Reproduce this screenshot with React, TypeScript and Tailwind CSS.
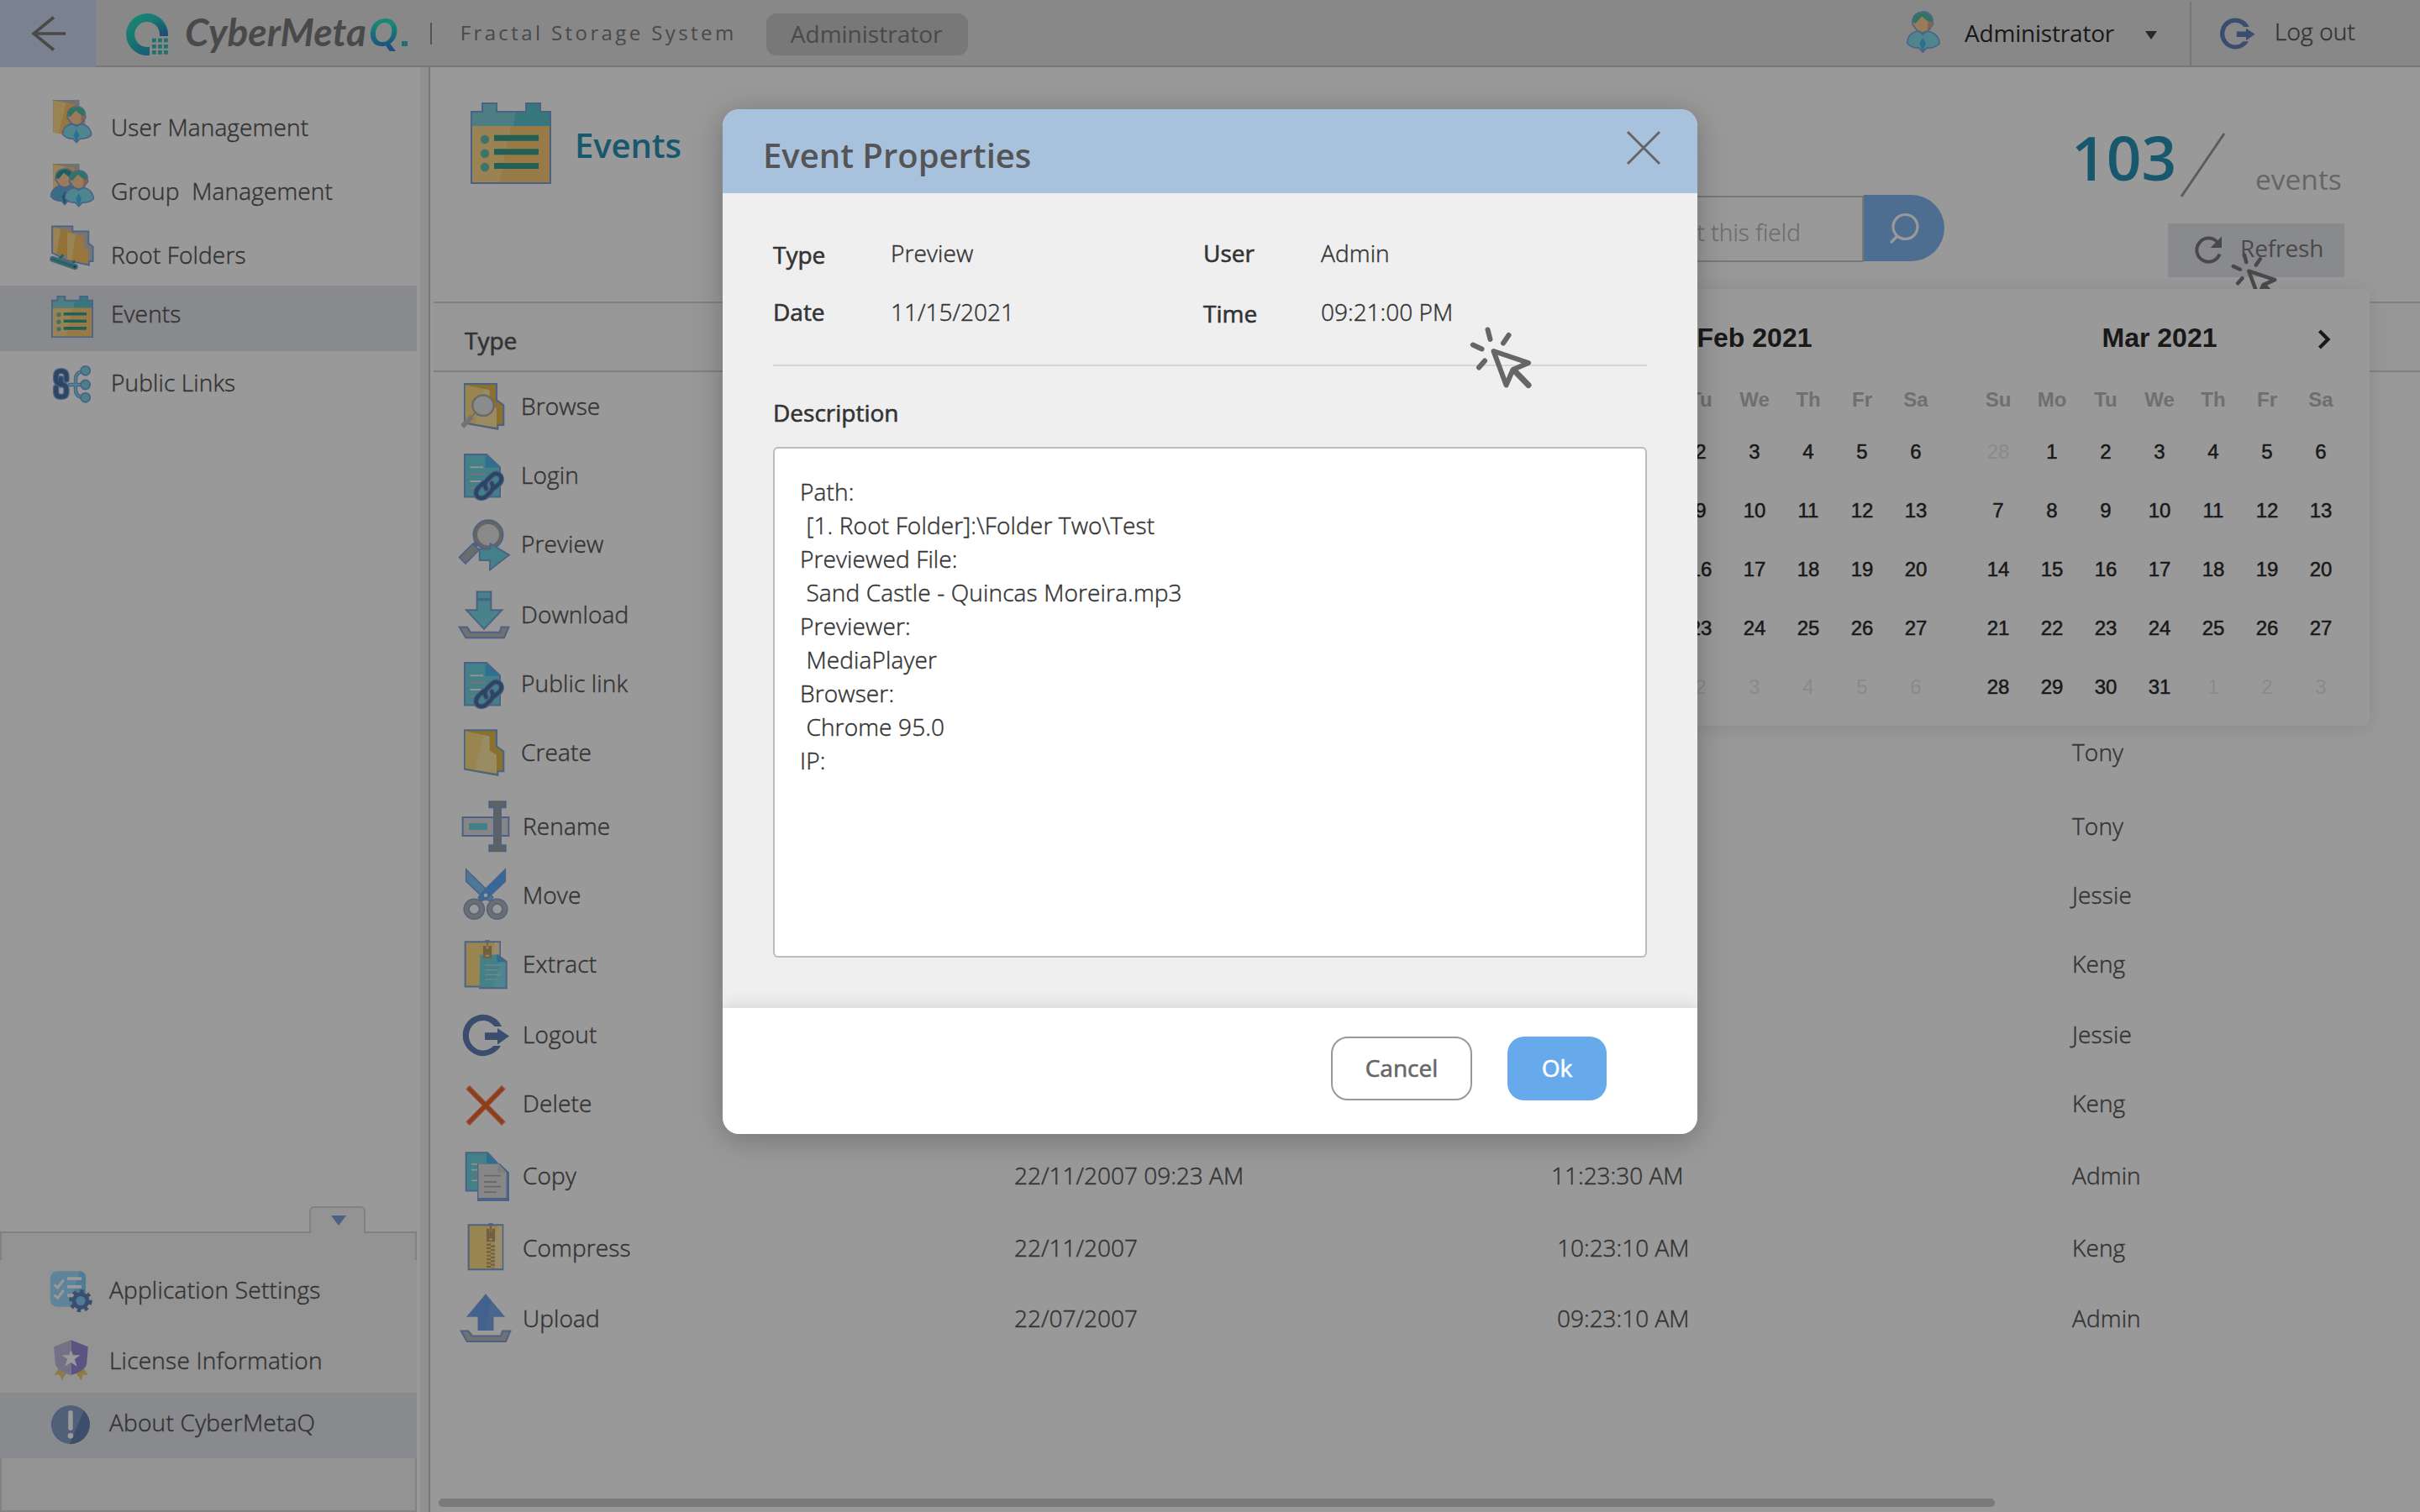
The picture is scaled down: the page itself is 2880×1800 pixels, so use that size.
import type { ReactNode } from "react";

const LINE = "#7fa3dc";
const PX = "[&_*]:[vector-effect:non-scaling-stroke]";

/* Text weights that sit between the installed cuts of Open Sans */
const BOOK = "font-light tracking-[0.14px] [-webkit-text-stroke:0.45px_currentColor]";
const DEMI = "font-medium tracking-normal [-webkit-text-stroke:0.6px_currentColor]";

/* ---------- shared drawings ---------- */

function Person({ hair = "#4fc0a8", body = "#84deed", tie = "#4bbaf0" }: { hair?: string; body?: string; tie?: string }) {
  return (
    <g stroke={LINE} strokeWidth="1.6" strokeLinejoin="round">
      <path d="M104 180C104 156 122 143 140 142L153 152L167 142C190 145 205 160 206 182C195 194 176 197 166 195L153 209L141 195C124 197 112 190 104 180Z" fill={body} />
      <path d="M153 162L163 182L153 208L143 182Z" fill={tie} stroke="none" />
      <path d="M121 112C120 92 136 81 154 81C172 81 186 93 184 112C187 118 184 124 180 127C175 138 164 146 153 147C142 146 131 138 126 127C121 124 119 118 121 112Z" fill="#ffcb98" />
      <path d="M123 114C121 94 137 83 154 83C171 83 184 95 182 112L178 118L150 95L130 118Z" fill={hair} stroke="none" />
      <path d="M170 110L182 116L178 128L168 140Z" fill="#f0a080" stroke="none" />
    </g>
  );
}

function EventsGlyph({ className }: { className: string }) {
  return (
    <svg viewBox="0 0 96 97" className={`${className} ${PX}`}>
      <path d="M1 11H14V1H31V11H66V1H83V11H95V96H1Z" fill="#fdcb76" />
      <path d="M1 28H48L34 96H1Z" fill="#ffdb8e" />
      <path d="M1 11H14V1H31V11H66V1H83V11H95V28H1Z" fill="#5cc9d4" />
      <path d="M1 11H14V1H31V11H54L51 28H1Z" fill="#7fd3da" />
      <path d="M1 11H14V1H31V11H66V1H83V11H95V96H1Z" fill="none" stroke={LINE} strokeWidth="2" />
      {[44, 60.7, 77].map((y) => (
        <circle key={y} cx="17" cy={y} r="5.2" fill="#6cc0ac" />
      ))}
      <path d="M28 38.7H81V45.7H28ZM28 55.3H81V62.2H28ZM28 72H81V79H28Z" fill="#39a08e" />
    </svg>
  );
}

function ClickCursor({ className }: { className: string }) {
  return (
    <svg viewBox="0 0 75 75" className={className} fill="none" stroke="currentColor" strokeWidth="6" strokeLinecap="round" strokeLinejoin="round">
      <path d="M21.5 3.5L24.5 15M46.5 10L40 19.5M3.8 21.5L14.5 26.5M18 40.5L11 48.5" />
      <path d="M28.5 29L70 43L51.5 51L43.5 69.5Z" />
      <path d="M54 53L70 69.5" strokeWidth="7" />
    </svg>
  );
}

function LogoutShape() {
  return (
    <g fill="#6280b7">
      <path d="M261 650A73 57 0 1 0 258 703L232 703A51 41 0 1 1 235 650Z" />
      <path d="M201 667H246V655L288 677L246 700V687H201Z" />
    </g>
  );
}

/* ---------- sidebar drawings ---------- */

const UserArt = (
  <>
    <path d="M69 57H164V92L184 120V150H145L69 172Z" fill="#bdbdbd" />
    <path d="M70 59L146 72V186L70 173Z" fill="#fdc566" />
    <path d="M70 59L115 67L90 177L70 173Z" fill="#ffdc8a" />
    <Person />
  </>
);

const GroupArt = (
  <>
    <path d="M69 285H164V330H69Z" fill="#bdbdbd" />
    <path d="M70 287L146 300V400L70 372Z" fill="#fdc566" />
    <path d="M70 287L112 294L92 372H70Z" fill="#ffdc8a" />
    <g transform="translate(-42 222)">
      <Person hair="#2e9fa0" body="#5fb4e2" tie="#2e8fa0" />
    </g>
    <g transform="translate(8 228)">
      <Person />
    </g>
  </>
);

const RootArt = (
  <>
    <path d="M66 508H139V526H196V569L212 581V633H198V647L118 630L66 603Z" fill="#c4c4c4" stroke={LINE} strokeWidth="1.8" />
    <path d="M70 512L137 526V618L70 603Z" fill="#f5bc5c" />
    <path d="M70 512L97 518L82 606L70 603Z" fill="#ffd98a" />
    <path d="M120 530L179 544V580L194 590V642L120 626Z" fill="#fdc566" />
    <path d="M120 530L150 537L136 629L120 626Z" fill="#ffdc8a" />
    <path d="M88 628L106 610M134 645L148 632" stroke="#3aa68d" strokeWidth="3" />
    <path d="M68 625L148 653" stroke={LINE} strokeWidth="7" strokeLinecap="round" />
    <path d="M68 625L148 653" stroke="#3fae94" strokeWidth="3.6" strokeLinecap="round" />
    <circle cx="147" cy="653" r="5" fill="#1d7a5c" />
  </>
);

const LinksArt = (
  <>
    <g fill="none" strokeLinecap="round">
      <path d="M128 1074H185M185 1024C160 1026 150 1036 150 1054V1092C150 1110 162 1120 185 1120" stroke={LINE} strokeWidth="4.4" />
      <path d="M128 1074H185M185 1024C160 1026 150 1036 150 1054V1092C150 1110 162 1120 185 1120" stroke="#84deed" strokeWidth="1.8" />
      {[
        [LINE, "7.4"],
        ["#4873a3", "4.8"],
      ].map(([c, w]) => (
        <path key={c} d="M97 1074C83 1070 80 1064 80 1054V1044C80 1030 86 1025 98 1025S117 1030 117 1044V1056M97 1052V1062C97 1068 101 1073 108 1075C116 1079 117 1084 117 1092V1100C117 1112 110 1117 98 1117S80 1112 80 1100V1084" stroke={c} strokeWidth={w} />
      ))}
    </g>
    {[1024, 1074, 1120].map((y) => (
      <circle key={y} cx="185" cy={y} r="16.5" fill="#7cd6e4" stroke={LINE} strokeWidth="1.8" />
    ))}
  </>
);

const SettingsArt = (
  <>
    <rect x="109" y="340" width="77" height="127" rx="15" ry="25" fill="#9fdcff" />
    <path d="M172 340C182 341 186 350 186 362V440C186 456 182 466 171 467H152Z" fill="#84cdfa" />
    <path d="M146 361H177V372H146ZM146 390H177V401H146ZM146 421H164V431H146Z" fill="#fff" />
    <path d="M118 388L125 399L138 371M118 425L125 436L138 408" fill="none" stroke="#fff" strokeWidth="3" />
    <ellipse cx="175" cy="446" rx="21" ry="34" fill="none" stroke="#6283ba" strokeWidth="4.4" strokeDasharray="4.4 4.4" />
    <ellipse cx="175" cy="446" rx="19" ry="31" fill="#6283ba" />
    <ellipse cx="175" cy="446" rx="10" ry="17" fill="#84cdfa" />
  </>
);

const LicenseArt = (
  <>
    <path d="M127 688L118 711L129 709L134 730L146 700ZM181 688L191 711L180 709L176 730L163 700Z" fill="#eecb73" />
    <path d="M154 586L191 610L188 672C184 692 170 704 154 711Z" fill="#968cd9" />
    <path d="M154 586L117 610L120 672C124 692 138 704 154 711Z" fill="#c0bce0" />
    <path d="M154 620L158.500 640L174 640L162 654L167 680L154 666L141 680L146 654L134 640L149.500 640Z" fill="#fff" />
  </>
);

const AboutArt = (
  <>
    <ellipse cx="153" cy="888" rx="42" ry="69" fill="#84a0c8" />
    <path d="M182 838C200 870 198 905 183 933C175 950 164 957 151 957Z" fill="#6482b4" />
    <rect x="148" y="837" width="10" height="72" rx="5" ry="8" fill="#fff" />
    <ellipse cx="153" cy="928" rx="6" ry="10" fill="#fff" />
  </>
);

/* ---------- event type drawings ---------- */

const tray = (d: string) => <path d={d} fill="#bcbcbc" stroke={LINE} strokeWidth="2" />;

const FolderArt = (
  <>
    <path d="M129 1338H243V1387L268 1402V1462H247V1474L129 1456Z" fill="#e6bb50" stroke={LINE} strokeWidth="2" />
    <path d="M131 1341L218 1357V1400L243 1412V1468L131 1453Z" fill="#ffde85" />
    <path d="M197 1353L218 1357V1400L243 1412V1468L166 1458Z" fill="#ffe8a4" />
  </>
);

const DocLinkArt = (
  <>
    <path d="M129 508H207L255 547V636H129Z" fill="#70d5e2" stroke={LINE} strokeWidth="2" />
    <path d="M203 510L254 548H203Z" fill="#4bbaf0" />
    <path d="M148 547H195M148 589H195" stroke="#f2f2f2" strokeWidth="2" />
    <path d="M148 568H203M148 609H180" stroke="#c4c4c4" strokeWidth="2" />
    <g fill="none" strokeLinecap="round">
      {[
        [LINE, "6.8"],
        ["#4873a3", "4.4"],
      ].map(([c, w]) => (
        <g key={c} stroke={c} strokeWidth={w}>
          <path d="M228 610C236 610 240 606 246 601L254 595C264 585 260 574 252 569C244 564 234 566 226 572L210 585C200 594 198 602 206 612" />
          <path d="M202 592C194 594 188 600 182 605C166 617 168 630 176 636C186 642 198 640 206 634L222 621C232 612 232 604 226 595" />
        </g>
      ))}
    </g>
  </>
);

type Art = { box: string; art: ReactNode };

const ART: Record<string, Art> = {
  Browse: {
    box: "102 283.3 204 161.9",
    art: (
      <>
        <g transform="translate(0 -1042)">{FolderArt}</g>
        <path d="M155 394L170 380" stroke="#b4b4b4" strokeWidth="1.6" />
        <path d="M115 418L150 389L161 400L126 430Z" fill="#c0c0c0" />
        <ellipse cx="195" cy="361" rx="38" ry="31" fill="#e8e8e8" stroke="#b0b0b0" strokeWidth="2.4" />
      </>
    ),
  },
  Login: { box: "102 490.6 204 161.9", art: DocLinkArt },
  "Public link": { box: "102 490.6 204 161.9", art: DocLinkArt },
  Preview: {
    box: "102 698 204 161.9",
    art: (
      <>
        <path d="M160 784L182 770" stroke={LINE} strokeWidth="6" />
        <path d="M110 818L157 778L181 795L132 837Z" fill="#b4b4b4" stroke={LINE} strokeWidth="1.8" />
        <ellipse cx="213" cy="750" rx="46" ry="38" fill="#e4e4e4" stroke={LINE} strokeWidth="6.4" />
        <ellipse cx="213" cy="750" rx="45" ry="37" fill="#e4e4e4" stroke="#a8a8a8" strokeWidth="4" />
        <path d="M182 793H221V777L288 811L219 856V827H182Z" fill="#70d5e2" stroke={LINE} strokeWidth="1.8" />
      </>
    ),
  },
  Download: {
    box: "102 910.4 204 161.9",
    art: (
      <>
        <path d="M173 922H223V977H262L198 1034L135 977H173Z" fill="#78d9e6" stroke={LINE} strokeWidth="2" />
        <path d="M173 945H223" stroke={LINE} strokeWidth="3" />
        {tray("M110 1028H138L150 1044H254L260 1028H286L270 1060H133Z")}
      </>
    ),
  },
  Create: { box: "102 1325 204 161.9", art: FolderArt },
  Rename: {
    box: "102 27.700 204 147.600",
    art: (
      <>
        <path d="M122 76H286V127H122Z" fill="#e0e0e0" stroke={LINE} strokeWidth="2" />
        <path d="M144 92H210V111H144Z" fill="#70d5e2" />
        <path d="M217 33H275V49H258V153H275V169H217V153H234V49H217Z" fill="#a0a0a0" stroke={LINE} strokeWidth="2" />
      </>
    ),
  },
  Move: {
    box: "102 216.800 204 147.600",
    art: (
      <>
        <path d="M134 219L204 272L230 296L222 306L200 300L134 252Z" fill="#84c8fd" stroke={LINE} strokeWidth="1.6" />
        <path d="M274 219L204 272L178 296L186 306L208 300L274 252Z" fill="#5aafff" stroke={LINE} strokeWidth="1.6" />
        {[163, 245].map((x) => (
          <g key={x} fill="none">
            <ellipse cx={x} cy="328" rx="27.500" ry="21" stroke={LINE} strokeWidth="7.4" />
            <ellipse cx={x} cy="328" rx="27.500" ry="21" stroke="#b8b8b8" strokeWidth="4.4" />
          </g>
        ))}
        <ellipse cx="204" cy="290" rx="7" ry="5" fill="#fff" />
      </>
    ),
  },
  Extract: {
    box: "102 405.800 204 147.600",
    art: (
      <>
        <path d="M131 418H255V541H131Z" fill="#ffde85" stroke={LINE} strokeWidth="2" />
        <path d="M236 420H253V460H226Z" fill="#ffe8b4" />
        <path d="M202 413H218V420H202Z" fill={LINE} />
        <path d="M210 418V430" stroke="#bf9f70" strokeWidth="1.5" />
        <path d="M184 453H245L278 472V544H182" fill="#70d5e2" />
        <path d="M258 470H277V544H230Z" fill="#84deed" />
        <path d="M244 453L277 473H244Z" fill="#4bbaf0" />
        <path d="M195 429H206V437H214V429H225V463H195Z" fill="#bf9f70" />
        <path d="M203 456H217" stroke="#ffde85" strokeWidth="2" />
        <path d="M245 453L278 472V545H180" fill="none" stroke={LINE} strokeWidth="2" />
        <path d="M201 482H258M201 495H243M201 508H258M201 521H243" stroke="#b8e4e6" strokeWidth="1.600" />
      </>
    ),
  },
  Logout: { box: "102 599.500 204 147.600", art: <LogoutShape /> },
  Delete: {
    box: "102 788.600 204 147.600",
    art: (
      <>
        <path d="M140 817L268 917M268 817L140 917" stroke="#ff7b64" strokeWidth="6.4" />
        <path d="M143 820L265 914M265 820L143 914" stroke="#e66923" strokeWidth="3.6" />
      </>
    ),
  },
  Copy: {
    box: "102 987 204 147.600",
    art: (
      <>
        <path d="M134 997H211L246 1026V1101H134Z" fill="#70d5e2" stroke={LINE} strokeWidth="2" />
        <path d="M207 998L244 1027H207Z" fill="#4bbaf0" />
        <path d="M153 1028H190M153 1044H178M153 1073H178" stroke="#e6f6f6" strokeWidth="1.800" />
        <path d="M153 1058H178" stroke="#b8b8b8" strokeWidth="1.800" />
        <path d="M174 1027H255L288 1051V1130H174Z" fill={LINE} />
        <path d="M178 1028H250L278 1051V1121H178Z" fill="#e2e2e2" />
        <path d="M247 1030L277 1051H247Z" fill="#d0d0d0" />
        <path d="M198 1060H258M198 1077H243M198 1090H258M198 1105H243" stroke="#b0b0b0" strokeWidth="1.800" />
      </>
    ),
  },
  Compress: {
    box: "102 1185 204 147.600",
    art: (
      <>
        <path d="M143 1195H265V1317H143Z" fill="#ffde85" stroke={LINE} strokeWidth="2" />
        <path d="M246 1197H263V1314H237V1240Z" fill="#ffe8b4" />
        <path d="M214 1190H230V1197H214Z" fill={LINE} />
        <path d="M222 1196V1212" stroke="#bf9f70" strokeWidth="2" />
        <path d="M207 1205H217V1213H227V1205H237V1241H207Z" fill="#bf9f70" />
        <path d="M216 1234H228" stroke="#ffde85" strokeWidth="2" />
        <path d="M214.500 1246V1313" stroke="#bf9f70" strokeWidth="5" strokeDasharray="2.200 2.200" />
        <path d="M229.500 1251V1313" stroke="#bf9f70" strokeWidth="5" strokeDasharray="2.200 2.200" />
      </>
    ),
  },
  Upload: {
    box: "102 1379 204 147.600",
    art: (
      <>
        <path d="M204 1387L268 1446H230V1483H178V1446H140Z" fill="#6ea2ee" stroke={LINE} strokeWidth="1.600" />
        <path d="M222 1405L266 1445H229V1482H204Z" fill="#7aaaf0" />
        <path d="M178 1461H230" stroke={LINE} strokeWidth="2" />
        {tray("M116 1486H142L156 1500H258L264 1486H292L276 1515H137Z")}
      </>
    ),
  },
};

/* ---------- page data ---------- */

const ROWS = [
  { type: "Browse", h: "h-[82px]", pad: "pl-2" },
  { type: "Login", h: "h-[82px]", pad: "pl-2" },
  { type: "Preview", h: "h-[82px]", pad: "pl-2" },
  { type: "Download", h: "h-[86px]", pad: "pl-2" },
  { type: "Public link", h: "h-[78px]", pad: "pl-2" },
  { type: "Create", h: "h-[86px]", pad: "pl-2", user: "Tony" },
  { type: "Rename", h: "h-[90px]", pad: "pl-2.5", user: "Tony" },
  { type: "Move", h: "h-[74px]", pad: "pl-2.5", user: "Jessie" },
  { type: "Extract", h: "h-[90px]", pad: "pl-2.5", user: "Keng" },
  { type: "Logout", h: "h-[78px]", pad: "pl-2.5", user: "Jessie" },
  { type: "Delete", h: "h-[86px]", pad: "pl-2.5", user: "Keng" },
  { type: "Copy", h: "h-[86px]", pad: "pl-2.5", date: "22/11/2007 09:23 AM", time: "11:23:30 AM", timePad: "", user: "Admin" },
  { type: "Compress", h: "h-[86px]", pad: "pl-2.5", date: "22/11/2007", time: "10:23:10 AM", timePad: "pl-[7px]", user: "Keng" },
  { type: "Upload", h: "h-[82px]", pad: "pl-2.5", date: "22/07/2007", time: "09:23:10 AM", timePad: "pl-[7px]", user: "Admin" },
];

const DAYS = ["Su", "Mo", "Tu", "We", "Th", "Fr", "Sa"];

const FEB = [31, ...Array.from({ length: 28 }, (_, i) => i + 1), 1, 2, 3, 4, 5, 6];
const MAR = [28, ...Array.from({ length: 31 }, (_, i) => i + 1), 1, 2, 3];

/* ---------- pieces ---------- */

function NavRow({ label, box, height, text = "", active, art }: { label: string; box: string; height: string; text?: string; active?: boolean; art: ReactNode }) {
  return (
    <div className={`flex items-center ${height} ${active ? "bg-[#e4e6ec]" : ""}`}>
      <svg viewBox={box} preserveAspectRatio="none" className={`ml-10 h-full w-[90px] shrink-0 ${PX}`}>
        {art}
      </svg>
      <span className={`whitespace-pre ${text}`}>{label}</span>
    </div>
  );
}

function Header() {
  return (
    <header className="flex h-20 items-start">
      <button className="h-20 w-[114px] bg-[#cbd9f0]">
        <svg viewBox="0 0 114 80" className="h-20 w-[114px]" fill="none" stroke="#7b7b7b" strokeWidth="3.6">
          <path d="M78 40H40M64 20.500L40 40L64 59.500" />
        </svg>
      </button>
      <div className="flex h-20 grow items-start border-b-2 border-[#c6c6c6] bg-[#e3e3e3]">
        <svg viewBox="60 48 150 150" className="mt-4 ml-9 size-[50px]">
          <defs>
            <linearGradient id="ring" x1="0.2" y1="0" x2="0.8" y2="1">
              <stop offset="0" stopColor="#2ae2c4" />
              <stop offset="0.550" stopColor="#2ab8bc" />
              <stop offset="1" stopColor="#2f8ad0" />
            </linearGradient>
            <linearGradient id="tail" x1="0" y1="0" x2="0.6" y2="1">
              <stop offset="0" stopColor="#2aa8b0" stopOpacity="0" />
              <stop offset="1" stopColor="#2f80c8" />
            </linearGradient>
          </defs>
          <path d="M210 129A75 75 0 1 0 144 197.500V167A45 45 0 1 1 180 129Z" fill="url(#ring)" />
          <path d="M168 65A75 75 0 0 1 210 129H180A45 45 0 0 0 152 81Z" fill="url(#tail)" />
          <g fill="#35bcb8">
            {[137, 159, 180].map((y) => [153, 174, 195].map((x) => <rect key={`${x}-${y}`} x={x} y={y} width="14.500" height="14" />))}
          </g>
        </svg>
        <div className="mt-[13px] ml-5 flex h-[50px] items-center font-[Lato] text-[46px] leading-none font-bold text-[#7b7b7b] italic">
          <span className="w-[219px]">CyberMeta</span>
          <span className="bg-linear-to-b from-[#2ae2c4] from-25% to-[#2f86d4] to-90% bg-clip-text pr-1 text-transparent">Q</span>
        </div>
        <span className="mt-[49px] h-1.5 w-[7px] bg-[#35b8bc]" />
        <span className="mt-[27px] ml-[27px] h-[26px] w-0.5 bg-[#8c8c8c]" />
        <span className="mt-[27px] ml-[34px] w-[364px] text-2xl leading-none tracking-[3.4px] text-[#7b7b7b]">Fractal Storage System</span>
        <span className="mt-4 flex h-[50px] w-[240px] items-center justify-center rounded-xl bg-[#c8c8c8] pr-px pb-0.5 leading-none font-medium text-[#7b7b7b]">Administrator</span>
        <svg viewBox="99 78 112 136" className={`mt-[13px] ml-auto h-[51px] w-[42px] ${PX}`}>
          <Person />
        </svg>
        <span className="mt-[25px] ml-7 w-[179px] leading-none tracking-[-0.2px] whitespace-nowrap text-[#2b2b2b]">Administrator</span>
        <svg viewBox="0 0 14 10" className="mt-[37px] ml-[36px] h-[10px] w-[14px]">
          <path d="M0 0H14L7 10Z" fill="#444" />
        </svg>
        <span className="mt-0.5 ml-[39px] h-[76px] w-0.5 bg-[#c6c6c6]" />
        <svg viewBox="118 616 172 117" preserveAspectRatio="none" className="mt-[21px] ml-[33px] h-[38px] w-[43px]">
          <LogoutShape />
        </svg>
        <span className={`mt-[23px] mr-[76px] ml-[23px] w-[97px] leading-none whitespace-nowrap ${BOOK}`}>Log out</span>
      </div>
    </header>
  );
}

function Sidebar() {
  return (
    <aside className={`flex w-[512px] border-r-2 border-[#c6c6c6] ${BOOK}`}>
      <div className="flex w-[500px] flex-col">
        <nav className="mt-[34px] w-[496px]">
          <NavRow label="User Management" box="0 42 270 228" height="h-[76px]" text="pl-0.5 pb-0.5" art={UserArt} />
          <NavRow label="Group  Management" box="0 270 270 228" height="h-[76px]" text="pl-0.5 pb-0.5" art={GroupArt} />
          <NavRow label="Root Folders" box="0 498 270 222" height="h-[74px]" text="pl-0.5" art={RootArt} />
          <div className="flex h-[78px] items-center bg-[#e4e6ec]">
            <EventsGlyph className="mr-[21px] mb-[5px] ml-[61px] size-[50px]" />
            <span className="pb-3">Events</span>
          </div>
          <NavRow label="Public Links" box="0 954 270 228" height="h-[76px]" text="pl-0.5 pb-0.5" art={LinksArt} />
        </nav>
        <div className="mt-auto w-[496px]">
          <div className="relative -mb-0.5 ml-[368px] flex h-8 w-[67px] items-center justify-center rounded-t-md border-2 border-b-0 border-[#d8d8d8] bg-[#f5f5f5]">
            <svg viewBox="0 0 18 12" className="ml-0.5 h-3 w-[18px]">
              <path d="M0 0H18L9 12Z" fill="#7fa3dc" />
            </svg>
          </div>
          <div className="h-[334px] border-2 border-[#d8d8d8] bg-[#f5f5f5] pt-8">
            <div className="-mx-0.5 bg-[#f5f5f5] tracking-[0.24px]">
              <NavRow label="Application Settings" box="72.900 300 164.100 240" height="h-20" text="pb-2.5" art={SettingsArt} />
              <NavRow label="License Information" box="72.900 540 164.100 234" height="h-[78px]" art={LicenseArt} />
              <NavRow label="About CyberMetaQ" box="72.900 774 164.100 234" height="h-[78px]" text="pb-2" active art={AboutArt} />
            </div>
          </div>
        </div>
      </div>
      <div className="grow bg-[#f2f2f2]" />
    </aside>
  );
}

function Toolbar() {
  return (
    <div className="flex h-[279px] items-start">
      <EventsGlyph className="mt-[42px] ml-12 h-[97px] w-24" />
      <h1 className="mt-[73px] ml-7 text-[40px] leading-none font-semibold tracking-[-0.1px] text-[#2893b4]">Events</h1>
      <div className="mt-[152px] ml-auto flex h-20 w-[614px] items-start">
        <div className="mt-px flex h-[79px] grow items-center justify-end border-2 border-[#c8c8c8] bg-white pt-1.5 pr-[73px] leading-none font-light tracking-[0.1px] text-[#b4b4b4] [-webkit-text-stroke:0.3px_currentColor]">Input this field</div>
        <button className="h-[79px] w-24 rounded-r-full bg-[#80b8f2]">
          <svg viewBox="0 0 96 79" className="h-[79px] w-24" fill="none" stroke="#fff" strokeWidth="3.200" strokeLinecap="round">
            <circle cx="49.500" cy="38" r="14.500" />
            <path d="M40 49L33 56" />
          </svg>
        </button>
      </div>
      <div className="mt-[70px] mr-[90px] ml-[154px] flex w-[322px] flex-col items-end">
        <div className="flex h-[116px] w-full items-start">
          <span className="-ml-[3px] w-[127px] text-[73px] leading-none font-semibold text-[#2893b4]">103</span>
          <svg viewBox="0 0 60 80" className="mt-[7px] ml-0.5 h-20 w-[60px] shrink-0">
            <path d="M2 77L53 2" stroke="#9a9a9a" strokeWidth="3" />
          </svg>
          <span className="mt-[47px] ml-[30px] text-[33.500px] leading-none font-medium text-[#aaa]">events</span>
        </div>
        <button className="relative flex h-16 w-[210px] items-center bg-[#e4e6ec] text-[#7b7b7b]">
          <svg viewBox="0 0 34 34" className="ml-8 size-[34px]" fill="none" stroke="#7b7b7b" strokeWidth="4">
            <path d="M29.500 21.500A14 14 0 1 1 27 7.500" />
            <path d="M32 0.500V14H18.500Z" fill="#7b7b7b" stroke="none" />
          </svg>
          <span className="ml-5 pb-1.5 leading-none tracking-[-0.1px]">Refresh</span>
          <ClickCursor className="absolute top-[35px] left-[75px] size-[56px]" />
        </button>
      </div>
    </div>
  );
}

function Month({ name, days, from, count }: { name: string; days: number[]; from: number; count: number }) {
  return (
    <div className="w-[448px] text-center">
      <div className="h-[76px] text-[32px] leading-[32px] font-bold">{name}</div>
      <div className="grid grid-cols-7 text-2xl">
        {DAYS.map((d) => (
          <span key={d} className="h-[41px] leading-[28px] font-bold text-[#b9b9b9]">{d}</span>
        ))}
        {days.map((n, i) => (
          <span key={i} className={i < from || i >= from + count ? "h-[70px] leading-[70px] text-[#e6e6e6]" : "h-[70px] leading-[70px] [-webkit-text-stroke:0.5px_#2b2b2b]"}>{n}</span>
        ))}
      </div>
    </div>
  );
}

function Calendar() {
  return (
    <div className="absolute top-[344px] right-[60px] flex h-[520px] w-[982px] justify-between rounded-lg bg-white px-[26px] pt-[42px] font-['Liberation_Sans'] text-[#2b2b2b] shadow-[0_2px_24px_rgba(0,0,0,0.1)]">
      <Month name="Feb 2021" days={FEB} from={1} count={28} />
      <Month name="Mar 2021" days={MAR} from={1} count={31} />
      <svg viewBox="0 0 16 24" className="absolute top-[48px] right-[46px] h-6 w-4" fill="none" stroke="#2b2b2b" strokeWidth="4.200">
        <path d="M2.500 2L12.500 12L2.500 22" />
      </svg>
    </div>
  );
}

function EventTable() {
  return (
    <>
      <div className={`ml-1 flex h-[84px] items-center border-y-2 border-[#d6d6d6] bg-[#fcfcfc] pt-2 pl-[37px] ${DEMI}`}>Type</div>
      {ROWS.map((row) => (
        <div key={row.type} className={`grid grid-cols-[695px_639px_620px_1fr] items-center leading-none ${BOOK} ${row.h}`}>
          <div className="flex items-center pl-8">
            <svg viewBox={ART[row.type].box} preserveAspectRatio="none" className={`h-16 w-[68px] overflow-visible ${PX}`}>
              {ART[row.type].art}
            </svg>
            <span className={`pb-0.5 ${row.pad}`}>{row.type}</span>
          </div>
          <span className="pb-0.5 tracking-normal">{row.date}</span>
          <span className={`pb-0.5 tracking-normal ${row.timePad ?? ""}`}>{row.time}</span>
          <span className="pb-0.5">{row.user}</span>
        </div>
      ))}
    </>
  );
}

function EventDialog() {
  return (
    <div className={`absolute inset-0 flex items-start justify-center bg-black/40 pt-[130px] leading-none text-[#333] ${BOOK}`}>
      <div className="relative flex h-[1220px] w-[1160px] flex-col overflow-hidden rounded-[20px] bg-[#efefef] shadow-[0_6px_36px_rgba(0,0,0,0.25)]">
        <div className="flex h-[100px] shrink-0 items-center justify-between bg-[#a8c2de] pt-1.5 pr-[43px] pl-12">
          <h2 className="pt-1 text-[40px] leading-none font-semibold tracking-normal text-[#555] [-webkit-text-stroke:0px]">Event Properties</h2>
          <svg viewBox="0 0 42 42" className="mb-3.5 size-[42px]" stroke="#666" strokeWidth="3">
            <path d="M2 2L40 40M40 2L2 40" />
          </svg>
        </div>
        <div className="flex grow flex-col px-[60px]">
          <div className="mt-[57px] grid grid-cols-[140px_372px_140px_1fr] gap-y-[42px]">
            <span className={`pt-0.5 ${DEMI}`}>Type</span>
            <span>Preview</span>
            <span className={DEMI}>User</span>
            <span>Admin</span>
            <span className={`-mt-0.5 ${DEMI}`}>Date</span>
            <span className="-mt-0.5 tracking-normal">11/15/2021</span>
            <span className={DEMI}>Time</span>
            <span className="-mt-0.5 tracking-normal">09:21:00 PM</span>
          </div>
          <div className="mt-[47px] h-0.5 bg-[#d6d6d6]" />
          <div className={`mt-[41px] ${DEMI}`}>Description</div>
          <div className="mt-[27px] h-[608px] rounded-md border-2 border-[#bbb] bg-white pt-[31px] pl-[30px] leading-10 whitespace-pre">
            {"Path:\n [1. Root Folder]:\\Folder Two\\Test\nPreviewed File:\n Sand Castle - Quincas Moreira.mp3\nPreviewer:\n MediaPlayer\nBrowser:\n Chrome 95.0\nIP:"}
          </div>
        </div>
        <div className="flex h-[150px] shrink-0 items-start justify-end bg-white pt-[34px] pr-[108px] shadow-[0_-2px_20px_rgba(0,0,0,0.12)]">
          <button className={`h-[76px] w-[168px] rounded-[20px] border-2 border-[#999] pb-0.5 text-[#666] ${DEMI}`}>Cancel</button>
          <button className={`ml-[42px] h-[76px] w-[118px] rounded-[20px] bg-[#67aaec] pb-0.5 text-white ${DEMI}`}>Ok</button>
        </div>
        <ClickCursor className="absolute top-[259px] left-[889px] size-[75px] text-[#666]" />
      </div>
    </div>
  );
}

export default function App() {
  return (
    <div className="relative flex h-[1800px] w-[2880px] flex-col overflow-hidden bg-white font-['Open_Sans',sans-serif] text-[28px] text-[#555]">
      <Header />
      <div className="flex grow">
        <Sidebar />
        <main className="flex w-[2368px] flex-col">
          <Toolbar />
          <EventTable />
          <div className="mt-auto mb-1.5 ml-2.5 h-2.5 w-[1852px] rounded-full bg-[#cbcbcb]" />
        </main>
      </div>
      <Calendar />
      <EventDialog />
    </div>
  );
}
